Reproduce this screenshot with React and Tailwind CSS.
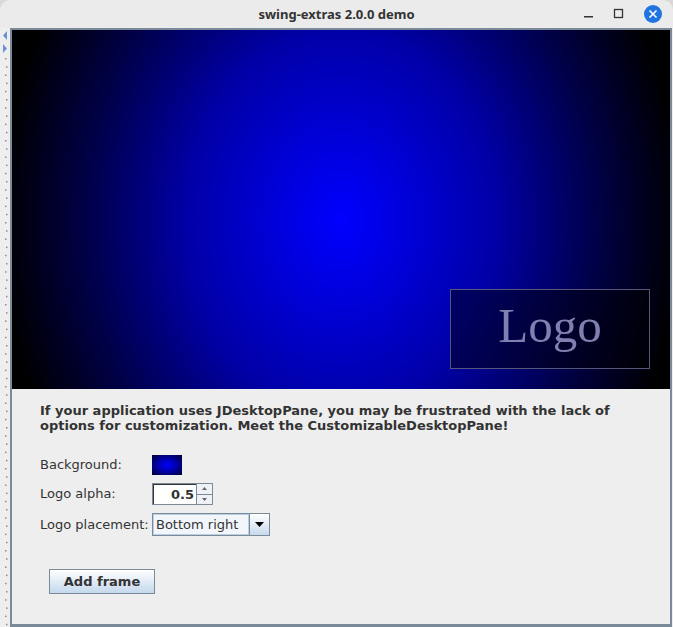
import React from 'react';

// divider of the split pane: two tiny arrows and a dotted grip
const Divider = () => (
    <div className="w-[10px] h-full bg-[#eeeeee] relative">
        <svg width="10" height="600" className="absolute left-0 top-0">
            <polygon points="7,3 7,12 3,7.5" fill="#6f8fd6" />
            <polygon points="3,16 3,25 7,20.5" fill="#6f8fd6" />
            {Array.from({ length: 70 }).map((_, i) => (
                <rect key={i} x={i % 2 ? 6 : 5} y={30 + i * 8.2} width="1.5" height="1.5" fill="#8a8a8a" />
            ))}
        </svg>
    </div>
);

const TitleBar = () => (
    <div className="h-[28px] bg-[#ebebeb] rounded-t-[10px] flex items-center relative shrink-0">
        <div className="flex-1 text-center text-[13px] font-bold text-[#333] pt-[1px]" style={{ fontFamily: '"Noto Sans", sans-serif' }}>
            swing-extras 2.0.0 demo
        </div>
        <div className="absolute right-[10px] top-0 h-full flex items-center gap-[18px]">
            <svg width="12" height="12"><rect x="1" y="8" width="9" height="1.5" fill="#333" /></svg>
            <svg width="12" height="12"><rect x="1.5" y="1.5" width="8" height="8" fill="none" stroke="#333" strokeWidth="1.3" /></svg>
            <svg width="20" height="20">
                <circle cx="10" cy="10" r="9" fill="#1f74e0" />
                <path d="M6.5 6.5 L13.5 13.5 M13.5 6.5 L6.5 13.5" stroke="white" strokeWidth="1.6" />
            </svg>
        </div>
    </div>
);

export default function App() {
    const label = 'text-[13px] text-[#333] w-[112px]';
    return (
        <div className="w-[673px] h-[627px] bg-[#d9d9d9] overflow-hidden" style={{ fontFamily: '"DejaVu Sans", sans-serif' }}>
            <TitleBar />
            <div className="flex h-[599px] bg-[#eeeeee]">
                <Divider />
                <div className="w-[662px] border-2 border-[#7a8a99] border-b-[3px] flex flex-col">
                    {/* desktop pane */}
                    <div className="h-[359px] relative"
                        style={{ background: 'radial-gradient(ellipse 340px 420px at 50% 53%, #0000ff 0%, #0000a8 45%, #000048 75%, #000000 100%)' }}>
                        <div className="absolute left-[438px] top-[259px] w-[200px] h-[80px] border border-[#56567a] bg-[rgba(0,0,0,0.45)] flex items-center justify-center">
                            <span className="text-[49px] leading-none text-[#7f7fb0] pb-[8px]" style={{ fontFamily: '"Liberation Serif", serif' }}>Logo</span>
                        </div>
                    </div>
                    {/* options panel */}
                    <div className="flex-1 bg-[#eeeeee] pl-[28px] pt-[14px]">
                        <p className="text-[13px] font-bold text-[#333] leading-[15px] w-[600px]">
                            If your application uses JDesktopPane, you may be frustrated with the lack of options for customization. Meet the CustomizableDesktopPane!
                        </p>
                        <div className="mt-[22px] flex items-center h-[20px]">
                            <span className={label}>Background:</span>
                            <div className="w-[30px] h-[20px]" style={{ background: 'radial-gradient(ellipse at center, #0000ff 0%, #0000a0 50%, #000030 100%)' }} />
                        </div>
                        <div className="mt-[8px] flex items-center h-[22px]">
                            <span className={label}>Logo alpha:</span>
                            <div className="flex h-[22px] border border-[#7a8a99] bg-white">
                                <div className="w-[43px] text-right pr-[2px] text-[13px] font-bold text-[#333] leading-[20px] border-t border-l border-[#333]">0.5</div>
                                <div className="w-[16px] flex flex-col border-l border-[#7a8a99] bg-[#eef2f7]">
                                    <div className="flex-1 flex items-center justify-center border-b border-[#7a8a99]">
                                        <svg width="5" height="3"><polygon points="0,3 5,3 2.5,0" fill="#666" /></svg>
                                    </div>
                                    <div className="flex-1 flex items-center justify-center">
                                        <svg width="5" height="3"><polygon points="0,0 5,0 2.5,3" fill="#666" /></svg>
                                    </div>
                                </div>
                            </div>
                        </div>
                        <div className="mt-[8px] flex items-center h-[23px]">
                            <span className={label}>Logo placement:</span>
                            <div className="flex w-[118px] h-[23px] border border-[#7a8a99] bg-[#eef2f8]">
                                <div className="flex-1 text-[13px] text-[#333] leading-[20px] pl-[2px] border border-[#b8cfe5] bg-[#f2f6fa]">Bottom right</div>
                                <div className="w-[20px] border-l border-[#7a8a99] flex items-center justify-center bg-gradient-to-b from-white to-[#c8d9ec]">
                                    <svg width="9" height="5"><polygon points="0,0 9,0 4.5,5" fill="#000" /></svg>
                                </div>
                            </div>
                        </div>
                        <button className="mt-[33px] ml-[9px] w-[106px] h-[25px] border border-[#7a8a99] bg-gradient-to-b from-white to-[#c4d8ec] text-[13px] font-bold text-[#333] flex items-center justify-center">
                            Add frame
                        </button>
                    </div>
                </div>
            </div>
        </div>
    );
}
